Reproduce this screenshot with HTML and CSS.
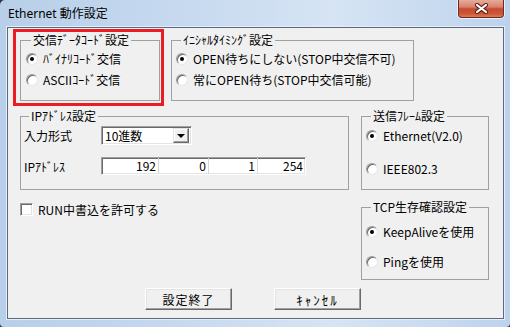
FILE: index.html
```html
<!DOCTYPE html>
<html lang="ja">
<head>
    <meta charset="UTF-8">
    <title>Ethernet 動作設定</title>
    <link rel="stylesheet" href="styles.css">
</head>
<body>
    <div class="window">
        <div class="titlebar">
            <span class="title">Ethernet 動作設定</span>
            <span class="close">
                <svg width="15" height="11" viewBox="0 0 15 11">
                    <path d="M3 2 L12 9 M12 2 L3 9" stroke="#5a2418" stroke-width="4.2" stroke-linecap="round" fill="none"/>
                    <path d="M3 2 L12 9 M12 2 L3 9" stroke="#fff" stroke-width="2.2" stroke-linecap="round" fill="none"/>
                </svg>
            </span>
        </div>

        <div class="client">
            <!-- 上段: 交信データコード / イニシャルタイミング -->
            <div class="row-top">
                <div class="mark">
                    <fieldset class="group g-code">
                        <legend>交信ﾃﾞｰﾀｺｰﾄﾞ設定</legend>
                        <div class="opt"><span class="radio on"></span>ﾊﾞｲﾅﾘｺｰﾄﾞ交信</div>
                        <div class="opt"><span class="radio"></span>ASCIIｺｰﾄﾞ交信</div>
                    </fieldset>
                </div>
                <fieldset class="group g-timing">
                    <legend>ｲﾆｼｬﾙﾀｲﾐﾝｸﾞ設定</legend>
                    <div class="opt"><span class="radio on"></span>OPEN待ちにしない(STOP中交信不可)</div>
                    <div class="opt"><span class="radio"></span>常にOPEN待ち(STOP中交信可能)</div>
                </fieldset>
            </div>

            <!-- 中段: IPアドレス / 送信フレーム / RUN中書込 / TCP -->
            <div class="row-mid">
                <fieldset class="group g-ip">
                    <legend>IPｱﾄﾞﾚｽ設定</legend>
                    <div class="form">
                        <span>入力形式</span>
                        <div class="combo"><span class="combo-text">10進数</span><span class="drop"></span></div>
                        <span>IPｱﾄﾞﾚｽ</span>
                        <div class="ip">
                            <span>192</span>
                            <span>0</span>
                            <span>1</span>
                            <span>254</span>
                        </div>
                    </div>
                </fieldset>
                <fieldset class="group g-frame">
                    <legend>送信ﾌﾚｰﾑ設定</legend>
                    <div class="opt"><span class="radio on"></span>Ethernet(V2.0)</div>
                    <div class="opt"><span class="radio"></span>IEEE802.3</div>
                </fieldset>

                <div class="check-row"><span class="check"></span>RUN中書込を許可する</div>
                <fieldset class="group g-tcp">
                    <legend>TCP生存確認設定</legend>
                    <div class="opt"><span class="radio on"></span>KeepAliveを使用</div>
                    <div class="opt"><span class="radio"></span>Pingを使用</div>
                </fieldset>
            </div>

            <div class="buttons">
                <span class="btn">設定終了</span>
                <span class="btn btn-cancel">ｷｬﾝｾﾙ</span>
            </div>
        </div>
    </div>
</body>
</html>
```

FILE: styles.css
```css
* {
    box-sizing: border-box;
}

body {
    margin: 0;
    background: #2a3442;
    font-family: "Noto Sans CJK JP", sans-serif;
    font-size: 12px;
    color: #000;
}

.window {
    width: 510px;
    height: 327px;
    padding: 0 6px 8px 7px;
    border-top-left-radius: 5px;
    border-bottom-left-radius: 4px;
    border-bottom-right-radius: 4px;
    background: linear-gradient(to right, #b8cfe9 0%, #c6d9ef 35%, #d6e4f4 65%, #c9dbf0 85%, #bcd2ec 100%);
    display: flex;
    flex-direction: column;
}

/* タイトルバー */
.titlebar {
    height: 27px;
    display: flex;
    justify-content: space-between;
    align-items: flex-start;
}

.title {
    margin: 5px 0 0 1px;
    font-family: "Noto Sans", "Noto Sans CJK JP", sans-serif;
    font-size: 12px;
    line-height: 17px;
}

.close {
    width: 46px;
    height: 18px;
    border: 1px solid #6a2b20;
    border-top: none;
    border-radius: 0 0 4px 4px;
    background: linear-gradient(#e7aa9b 0%, #d98471 40%, #c84a32 52%, #cd5536 80%, #dd7a56 100%);
    box-shadow: 0 1px 0 #e9f0f9, 1px 0 0 #e9f0f9, -1px 0 0 #e9f0f9;
    display: flex;
    align-items: center;
    justify-content: center;
}

/* クライアント領域 */
.client {
    height: 292px;
    background: #f0f0f0;
    border: 1px solid #5b6a7c;
    box-shadow: 0 0 0 1px #e4edf8;
}

.row-top {
    display: flex;
    align-items: flex-start;
    margin: 1px 0 0 5px;
}

.mark {
    border: 3px solid #ec1c24;
    padding: 2px 1px 2px 4px;
}

.group {
    margin: 0;
    padding: 2px 0 0 5px;
    min-width: 0;
    border: 1px solid #a0a0a0;
}

.group legend {
    margin-left: 5px;
    padding: 0 2px;
    line-height: 12px;
    white-space: nowrap;
}

.g-code {
    width: 140px;
    height: 67px;
}

.g-timing {
    width: 243px;
    height: 67px;
    margin: 5px 0 0 7px;
    padding-left: 4px;
}

.row-mid {
    display: grid;
    grid-template-columns: 329px 128px;
    column-gap: 12px;
    row-gap: 11px;
    margin: 4px 0 0 12px;
}

.g-ip {
    height: 80px;
    padding-left: 3px;
}

.g-frame {
    height: 80px;
    padding: 3px 0 0 4px;
}

.g-frame .opt + .opt {
    margin-top: 12px;
}

.g-tcp {
    height: 79px;
    padding: 8px 0 0 4px;
}

.g-tcp .opt + .opt {
    margin-top: 9px;
}

.opt {
    display: flex;
    align-items: center;
    gap: 5px;
    height: 21px;
    white-space: nowrap;
}

/* ラジオボタン */
.radio {
    position: relative;
    flex: none;
    width: 12px;
    height: 12px;
    border-radius: 50%;
    background: #fff;
    border: 1px solid;
    border-color: #9a9a9a #e6e6e6 #e6e6e6 #9a9a9a;
    box-shadow: inset 1px 1px 0 #6a6a6a;
}

.radio.on::after {
    content: "";
    position: absolute;
    left: 3px;
    top: 3px;
    width: 4px;
    height: 4px;
    border-radius: 50%;
    background: #000;
}

/* IPアドレス設定 */
.form {
    display: grid;
    grid-template-columns: 77px 1fr;
    grid-template-rows: 19px 18px;
    row-gap: 12px;
    align-items: center;
    margin-top: 2px;
}

.combo {
    width: 91px;
    height: 19px;
    display: flex;
    align-items: center;
    padding: 2px;
    background: #fff;
    border: 1px solid;
    border-color: #a0a0a0 #fff #fff #a0a0a0;
    box-shadow: inset 1px 1px 0 #696969, inset -1px -1px 0 #e3e3e3;
}

.combo-text {
    flex: 1;
    padding-left: 1px;
}

.drop {
    position: relative;
    width: 16px;
    height: 15px;
    background: #f0f0f0;
    border: 1px solid;
    border-color: #e3e3e3 #696969 #696969 #e3e3e3;
    box-shadow: inset -1px -1px 0 #a0a0a0, inset 1px 1px 0 #fff;
}

.drop::after {
    content: "";
    position: absolute;
    left: 3px;
    top: 5px;
    border-left: 4px solid transparent;
    border-right: 4px solid transparent;
    border-top: 4px solid #000;
}

.ip {
    width: 205px;
    height: 18px;
    display: grid;
    grid-template-columns: 56px 50px 49px 1fr;
    background: #fff;
    border: 1px solid;
    border-color: #a0a0a0 #fff #fff #a0a0a0;
    box-shadow: inset 1px 1px 0 #696969, inset -1px -1px 0 #e3e3e3;
    line-height: 16px;
}

.ip span {
    text-align: right;
    padding-right: 2px;
}

.ip span + span {
    border-left: 1px solid #d8d8d8;
}

/* チェックボックス */
.check-row {
    display: flex;
    align-items: center;
    gap: 5px;
    height: 13px;
    margin-top: 2px;
    white-space: nowrap;
}

.check {
    width: 13px;
    height: 13px;
    background: #fff;
    border: 1px solid;
    border-color: #a0a0a0 #fff #fff #a0a0a0;
    box-shadow: inset 1px 1px 0 #696969, inset -1px -1px 0 #e3e3e3;
}

/* ボタン */
.buttons {
    display: flex;
    gap: 42px;
    margin: 8px 0 0 137px;
}

.btn {
    width: 87px;
    height: 22px;
    display: flex;
    align-items: center;
    justify-content: center;
    letter-spacing: 1px;
    background: #f0f0f0;
    border: 1px solid;
    border-color: #fff #696969 #696969 #fff;
    box-shadow: inset -1px -1px 0 #a0a0a0, inset 1px 1px 0 #e3e3e3;
}

.btn-cancel {
    font-size: 13px;
    letter-spacing: 2px;
}
```
